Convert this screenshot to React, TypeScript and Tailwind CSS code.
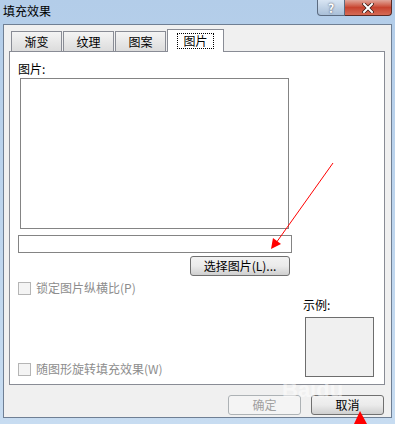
import React from "react";

const cjk = '"Noto Sans CJK SC", "Liberation Sans", sans-serif';

const tabs = ["渐变", "纹理", "图案", "图片"];

const CheckRow: React.FC<{ label: string }> = ({ label }) => (
  <div className="flex items-center gap-[5px]">
    <span className="w-[13px] h-[13px] border border-[#b5b5b5] bg-[#f4f4f4]" />
    <span className="text-[12px] leading-[14px] text-[#8d8d8d]">{label}</span>
  </div>
);

export default function App() {
  return (
    <div
      className="relative w-[395px] h-[424px] overflow-hidden bg-gradient-to-b from-[#b3cde9] to-[#c7dcf1] select-none"
      style={{ fontFamily: cjk }}
    >
      <div className="pointer-events-none absolute left-[282px] top-[378px] z-20 text-[22px] font-bold leading-[24px] text-white/50" style={{ fontFamily: '"Liberation Sans", sans-serif' }}>
        Baidu
      </div>

      {/* title bar */}
      <div className="flex h-[24px] items-start">
        <div className="pl-[3px] pt-[4px] text-[12px] leading-[14px] text-black">填充效果</div>
        <div className="ml-auto mr-[3px] flex h-[16px]">
          <div className="flex w-[28px] items-center justify-center rounded-bl-[4px] border border-t-0 border-[#5b6b80] bg-gradient-to-b from-[#d8e5f3] to-[#a9bfd8] text-[12px] font-bold leading-[14px] text-white [text-shadow:0_0_2px_#334]">
            ?
          </div>
          <div className="flex w-[47px] items-center justify-center rounded-br-[4px] border border-l-0 border-t-0 border-[#5b2a24] bg-gradient-to-b from-[#e0a59a] via-[#c7432f] to-[#d56a55]">
            <svg width="12" height="10" viewBox="0 0 12 10">
              <path d="M2 1 L10 9 M10 1 L2 9" stroke="#3a1a14" strokeWidth="3.5" strokeLinecap="square" />
              <path d="M2 1 L10 9 M10 1 L2 9" stroke="#ffffff" strokeWidth="2" strokeLinecap="square" />
            </svg>
          </div>
        </div>
      </div>

      {/* dialog body */}
      <div className="mx-[3px] flex h-[394px] w-[389px] flex-col border border-[#6f7f94] bg-[#f0f0f0] pl-[5px] pr-[7px] pt-[4px]">
        {/* tabs */}
        <div className="flex h-[22px] items-end pl-[2px]">
          {tabs.map((t, i) =>
            i === 3 ? (
              <div
                key={t}
                className="relative z-10 -mb-px flex h-[23px] w-[57px] items-start justify-center border border-b-0 border-[#898c95] bg-white pt-[3px]"
              >
                <span className="border border-dotted border-black px-[5px] text-[12px] leading-[14px]">{t}</span>
              </div>
            ) : (
              <div
                key={t}
                className="mr-px flex h-[20px] w-[51px] items-center justify-center border border-b-0 border-[#898c95] bg-gradient-to-b from-[#f4f4f4] to-[#dcdcdc] text-[12px]"
              >
                {t}
              </div>
            )
          )}
        </div>

        {/* panel */}
        <div className="flex h-[334px] w-[376px] flex-col border border-[#898c95] bg-white pl-[8px] pt-[10px]">
          <div className="text-[12px] leading-[14px] text-black">图片:</div>
          <div className="ml-[2px] mt-[2px] h-[151px] w-[269px] border border-[#848484]" />
          <div className="mt-[6px] h-[18px] w-[274px] border border-[#848484]" />
          <div className="mt-[3px] flex w-[272px] justify-end">
            <div className="flex h-[20px] w-[100px] items-center justify-center rounded-[3px] border border-[#707070] bg-gradient-to-b from-[#f2f2f2] via-[#ebebeb] to-[#cfcfcf] text-[12px]">
              选择图片(L)...
            </div>
          </div>
          <div className="mt-[5px]">
            <CheckRow label="锁定图片纵横比(P)" />
          </div>
          <div className="flex flex-1 items-end justify-between pb-[7px] pr-[10px]">
            <div className="pb-[1px]">
              <CheckRow label="随图形旋转填充效果(W)" />
            </div>
            <div className="flex flex-col">
              <div className="text-[12px] leading-[14px] text-black">示例:</div>
              <div className="ml-[2px] mt-[5px] h-[60px] w-[69px] border border-[#6d6d6d] bg-[#f0f0f0]" />
            </div>
          </div>
        </div>

        {/* buttons */}
        <div className="mt-[10px] flex justify-end gap-[10px]">
          <div className="flex h-[20px] w-[73px] items-center justify-center rounded-[3px] border border-[#adb2b5] bg-[#f4f4f4] text-[12px] text-[#a0a0a0]">
            确定
          </div>
          <div className="flex h-[20px] w-[73px] items-center justify-center rounded-[3px] border border-[#707070] bg-gradient-to-b from-[#f2f2f2] via-[#ebebeb] to-[#cfcfcf] text-[12px]">
            取消
          </div>
        </div>
      </div>

      {/* annotation arrows */}
      <svg className="pointer-events-none absolute left-0 top-0 z-30" width="395" height="424">
        <line x1="333" y1="163" x2="276" y2="243" stroke="#ff0000" strokeWidth="1" />
        <polygon points="271,249 273,238 281,244" fill="#ff0000" />
        <polygon points="360,411 354,424 367,424" fill="#ff0000" />
      </svg>
    </div>
  );
}
